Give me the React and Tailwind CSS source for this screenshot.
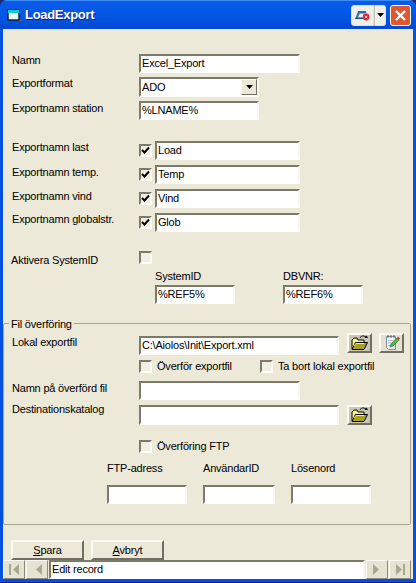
import React from "react";

const sunk = "box-border border-2 border-t-[#7c7a68] border-l-[#7c7a68] border-r-[#f7f6ef] border-b-[#ffffff] bg-white";

function Field({ w, h = "h-[19px]", children }) {
  return (
    <div className={`${sunk} ${w} ${h} shrink-0 pl-[1px] leading-[15px] text-black whitespace-nowrap overflow-hidden`}>
      {children}
    </div>
  );
}

function Check({ on }) {
  return (
    <div className="box-border w-[13px] h-[13px] shrink-0 border-2 border-t-[#7c7a68] border-l-[#7c7a68] border-r-[#fbfaf5] border-b-[#ffffff] bg-[#f1efe2] flex items-center justify-center">
      {on && (
        <svg width="9" height="9" viewBox="0 0 9 9">
          <path d="M1 4 L3.5 6.5 L8 1.5" fill="none" stroke="#000" strokeWidth="2" />
        </svg>
      )}
    </div>
  );
}

function Label({ children, className = "w-[127px]" }) {
  return <div className={`${className} shrink-0 leading-[14px] whitespace-nowrap`}>{children}</div>;
}

function FolderIcon() {
  return (
    <svg width="18" height="16" viewBox="0 0 18 16">
      <path d="M9 3 C10 0.5 13 0.5 15 2" fill="none" stroke="#000" strokeWidth="1" />
      <path d="M13.5 3 L17 3 L15.5 0.5 Z" fill="#000" />
      <path d="M1 14 L1 5 L3 3 L6 3 L7 5 L13 5 L13 7" fill="#f8f080" stroke="#000" strokeWidth="1" />
      <path d="M1 14.5 L4.5 7.5 L16.5 7.5 L13 14.5 Z" fill="#a8a020" stroke="#000" strokeWidth="1" />
      <path d="M3 11 L5 8.5 L13 8.5" fill="none" stroke="#f8f080" strokeWidth="1" />
    </svg>
  );
}

function NoteIcon() {
  return (
    <svg width="18" height="18" viewBox="0 0 18 18">
      <path d="M3.5 2.5 H12.5 V15.5 H5.5 L3.5 13.5 Z" fill="#eef2f6" stroke="#7f8ea0" strokeWidth="1" />
      <path d="M5 1 V4 M8 1 V4 M11 1 V4" stroke="#56657a" strokeWidth="1" />
      <path d="M5 6.5 H11 M5 9 H9 M5 11.5 H8" stroke="#b4bcc6" strokeWidth="1" />
      <path d="M7 13 L8 10 L14 4 L16 6 L10 12 Z" fill="#58b848" stroke="#2a7a2a" strokeWidth="0.7" />
      <path d="M14 4 L15 2.5 L17 4.5 L16 6 Z" fill="#d83030" />
    </svg>
  );
}

function Tri({ dir, bar }) {
  const tri = dir === "left" ? "M7 1 L1 6.5 L7 12 Z" : "M1 1 L7 6.5 L1 12 Z";
  return (
    <svg width="11" height="13" viewBox={dir === "left" ? "-3 0 11 13" : "0 0 11 13"}>
      <path d={tri} fill="#a9a793" />
      {bar && <rect x={dir === "left" ? -3 : 8} y="1" width="2" height="11" fill="#a9a793" />}
    </svg>
  );
}

function NavBtn({ dir, bar, w = "w-[22px]" }) {
  return (
    <div className={`${w} h-[19px] box-border shrink-0 border border-t-[#fbfaf5] border-l-[#fbfaf5] border-r-[#8f8c7a] border-b-[#8f8c7a] bg-[#e6e3d1] flex items-center justify-center`}>
      <Tri dir={dir} bar={bar} />
    </div>
  );
}

function PushBtn({ children }) {
  return (
    <div className="w-[73px] h-[20px] box-border shrink-0 border-2 border-t-[#fbfaf5] border-l-[#fbfaf5] border-r-[#716f64] border-b-[#716f64] bg-[#ece9d8] flex items-center justify-center leading-none">
      {children}
    </div>
  );
}

export default function App() {
  return (
    <div
      className="w-[416px] h-[583px] overflow-hidden bg-[#1a2a6a] text-[11px] text-black tracking-[-0.2px]"
      style={{ fontFamily: '"Liberation Sans", Arial, sans-serif' }}
    >
      <div className="h-full flex flex-col rounded-t-[7px] overflow-hidden bg-[#0450e0]">
        {/* Title bar */}
        <div className="h-[29px] shrink-0 flex items-center pl-[7px] pr-[5px] bg-gradient-to-b from-[#0a5ae8] via-[#0358e6] to-[#0348d0] border-t border-t-[#3d8cf5]">
          <svg width="15" height="14" viewBox="0 0 15 14" className="shrink-0">
            <rect x="1" y="2" width="11" height="10" fill="#e8f8f8" stroke="#06203a" strokeWidth="1.4" />
            <rect x="1" y="2" width="11" height="3" fill="#16c8c8" />
            <path d="M12.5 12.5 H15" stroke="#80603a" strokeWidth="1" />
          </svg>
          <div
            className="ml-[3px] text-white font-bold text-[13px] tracking-[-0.3px]"
            style={{ textShadow: "1px 1px 0 #0f1f8f" }}
          >
            LoadExport
          </div>
          <div className="ml-auto flex items-center h-[21px]">
            <div className="w-[23px] h-[21px] box-border flex items-center justify-center rounded-l-[3px] bg-[#f0efe8] border border-[#cfe0f5]">
              <svg width="17" height="12" viewBox="0 0 21 14">
                <path d="M2 11 L5 2 H15 V5 H7 L5 10 Z" fill="#2f6db5" />
                <path d="M1 12 H15 V10 H2 Z" fill="#1a4a8a" />
                <circle cx="15" cy="9.5" r="4.2" fill="#d8263a" />
                <path d="M13.5 8 L16.5 11 M16.5 8 L13.5 11" stroke="#fff" strokeWidth="1" />
              </svg>
            </div>
            <div className="w-[12px] h-[21px] box-border flex items-center justify-center rounded-r-[3px] bg-[#f0efe8] border border-[#cfe0f5] border-l-[#c8c6b8]">
              <svg width="7" height="4" viewBox="0 0 7 4">
                <path d="M0 0 H7 L3.5 4 Z" fill="#000" />
              </svg>
            </div>
            <div className="ml-[4px] w-[21px] h-[21px] box-border flex items-center justify-center rounded-[3px] bg-[#e2562f] border border-white">
              <svg width="13" height="13" viewBox="0 0 13 13">
                <path d="M2 2 L11 11 M11 2 L2 11" stroke="#fff" strokeWidth="2.4" />
              </svg>
            </div>
          </div>
        </div>

        {/* Client area */}
        <div className="flex-1 mx-[3px] bg-[#ece9d8] flex flex-col min-h-0">
          <div className="pl-[9px] pt-[25px] flex flex-col">
            <div className="flex">
              <Label><div className="-mt-[1px]">Namn</div></Label>
              <Field w="w-[161px]">Excel_Export</Field>
            </div>
            <div className="flex mt-[4px]">
              <Label><div className="-mt-[1px]">Exportformat</div></Label>
              <div className={`${sunk} w-[120px] h-[20px] pl-[1px] leading-[16px] flex justify-between`}>
                ADO
                <div className="w-[16px] h-[16px] box-border border border-t-[#fbfaf5] border-l-[#fbfaf5] border-r-[#716f64] border-b-[#716f64] bg-[#ece9d8] flex items-center justify-center">
                  <svg width="7" height="4" viewBox="0 0 7 4">
                    <path d="M0 0 H7 L3.5 4 Z" fill="#000" />
                  </svg>
                </div>
              </div>
            </div>
            <div className="flex mt-[4px]">
              <Label>Exportnamn station</Label>
              <Field w="w-[120px]">%LNAME%</Field>
            </div>

            <div className="flex mt-[21px]">
              <Label><div className="-mt-[1px]">Exportnamn last</div></Label>
              <div className="mt-[3px]"><Check on /></div>
              <div className="ml-[3px]"><Field w="w-[145px]">Load</Field></div>
            </div>
            <div className="flex mt-[5px]">
              <Label>Exportnamn temp.</Label>
              <div className="mt-[3px]"><Check on /></div>
              <div className="ml-[3px]"><Field w="w-[145px]">Temp</Field></div>
            </div>
            <div className="flex mt-[5px]">
              <Label>Exportnamn vind</Label>
              <div className="mt-[3px]"><Check on /></div>
              <div className="ml-[3px]"><Field w="w-[145px]">Vind</Field></div>
            </div>
            <div className="flex mt-[5px]">
              <Label><div className="-mt-[1px]">Exportnamn globalstr.</div></Label>
              <div className="mt-[3px]"><Check on /></div>
              <div className="ml-[3px]"><Field w="w-[145px]">Glob</Field></div>
            </div>

            <div className="flex mt-[19px] h-[13px]">
              <Label><div className="mt-[2px] -ml-[1px]">Aktivera SystemID</div></Label>
              <Check />
            </div>
            <div className="flex ml-[143px] mt-[5px]">
              <div className="w-[128px]">
                <div className="h-[14px] leading-[14px]">SystemID</div>
                <div className="mt-[2px]"><Field w="w-[80px]">%REF5%</Field></div>
              </div>
              <div>
                <div className="h-[14px] leading-[14px]">DBVNR:</div>
                <div className="mt-[2px]"><Field w="w-[80px]">%REF6%</Field></div>
              </div>
            </div>
          </div>

          {/* Fieldset */}
          <div className="relative mt-[19px] mr-[2px] h-[202px] shrink-0 box-border border border-[#a8a693] rounded-[2px] pl-[8px] pt-[9px]">
            <div className="absolute -top-[7px] left-[5px] bg-[#ece9d8] px-[2px] leading-[14px]">Fil överföring</div>
            <div className="flex">
              <Label><div className="mt-[2px]">Lokal exportfil</div></Label>
              <div className="mt-[3px]"><Field w="w-[200px]">C:\Aiolos\Init\Export.xml</Field></div>
              <div className="ml-[8px] w-[25px] h-[20px] box-border border-2 border-t-[#fbfaf5] border-l-[#fbfaf5] border-r-[#716f64] border-b-[#716f64] bg-[#c9c6b5] flex items-center justify-center"><FolderIcon /></div>
              <div className="ml-[7px] w-[25px] h-[20px] box-border border-2 border-t-[#fbfaf5] border-l-[#fbfaf5] border-r-[#716f64] border-b-[#716f64] bg-[#e4e1cf] flex items-center justify-center"><NoteIcon /></div>
            </div>
            <div className="flex ml-[127px] mt-[5px] h-[13px] items-center">
              <Check />
              <div className="ml-[5px] w-[103px] whitespace-nowrap">Överför exportfil</div>
              <Check />
              <div className="ml-[5px] whitespace-nowrap">Ta bort lokal exportfil</div>
            </div>
            <div className="flex mt-[8px]">
              <Label>Namn på överförd fil</Label>
              <Field w="w-[161px]">{""}</Field>
            </div>
            <div className="flex mt-[5px]">
              <Label><div className="-mt-[3px]">Destinationskatalog</div></Label>
              <Field w="w-[200px]" h="h-[20px]">{""}</Field>
              <div className="ml-[8px] w-[25px] h-[20px] box-border border-2 border-t-[#fbfaf5] border-l-[#fbfaf5] border-r-[#716f64] border-b-[#716f64] bg-[#c9c6b5] flex items-center justify-center"><FolderIcon /></div>
            </div>
            <div className="flex ml-[127px] mt-[15px] h-[13px] items-center">
              <Check />
              <div className="ml-[5px] whitespace-nowrap">Överföring FTP</div>
            </div>
            <div className="flex ml-[95px] mt-[8px]">
              <div className="w-[96px]">
                <div className="h-[14px] leading-[14px]">FTP-adress</div>
                <div className="mt-[10px]"><Field w="w-[80px]">{""}</Field></div>
              </div>
              <div className="w-[88px]">
                <div className="h-[14px] leading-[14px]">AnvändarID</div>
                <div className="mt-[10px]"><Field w="w-[72px]">{""}</Field></div>
              </div>
              <div>
                <div className="h-[14px] leading-[14px]">Lösenord</div>
                <div className="mt-[10px]"><Field w="w-[80px]">{""}</Field></div>
              </div>
            </div>
          </div>

          {/* Buttons */}
          <div className="flex gap-[7px] pl-[8px] mt-[15px]">
            <PushBtn><span><u>S</u>para</span></PushBtn>
            <PushBtn><span><u>A</u>vbryt</span></PushBtn>
          </div>

          {/* Navigator */}
          <div className="flex items-start gap-[1px] h-[19px]">
            <NavBtn dir="left" bar />
            <NavBtn dir="left" />
            <div className="flex-1 box-border h-[19px] border-2 border-t-[#7c7a68] border-l-[#7c7a68] border-r-[#f7f6ef] border-b-[#ffffff] bg-white leading-[15px] pl-[1px]">Edit record</div>
            <NavBtn dir="right" />
            <NavBtn dir="right" bar />
            <div className="w-[1px] shrink-0" />
          </div>
        </div>
        <div className="h-[4px] shrink-0 bg-[#0450e0] border-b border-b-[#001ea0]" />
      </div>
    </div>
  );
}
